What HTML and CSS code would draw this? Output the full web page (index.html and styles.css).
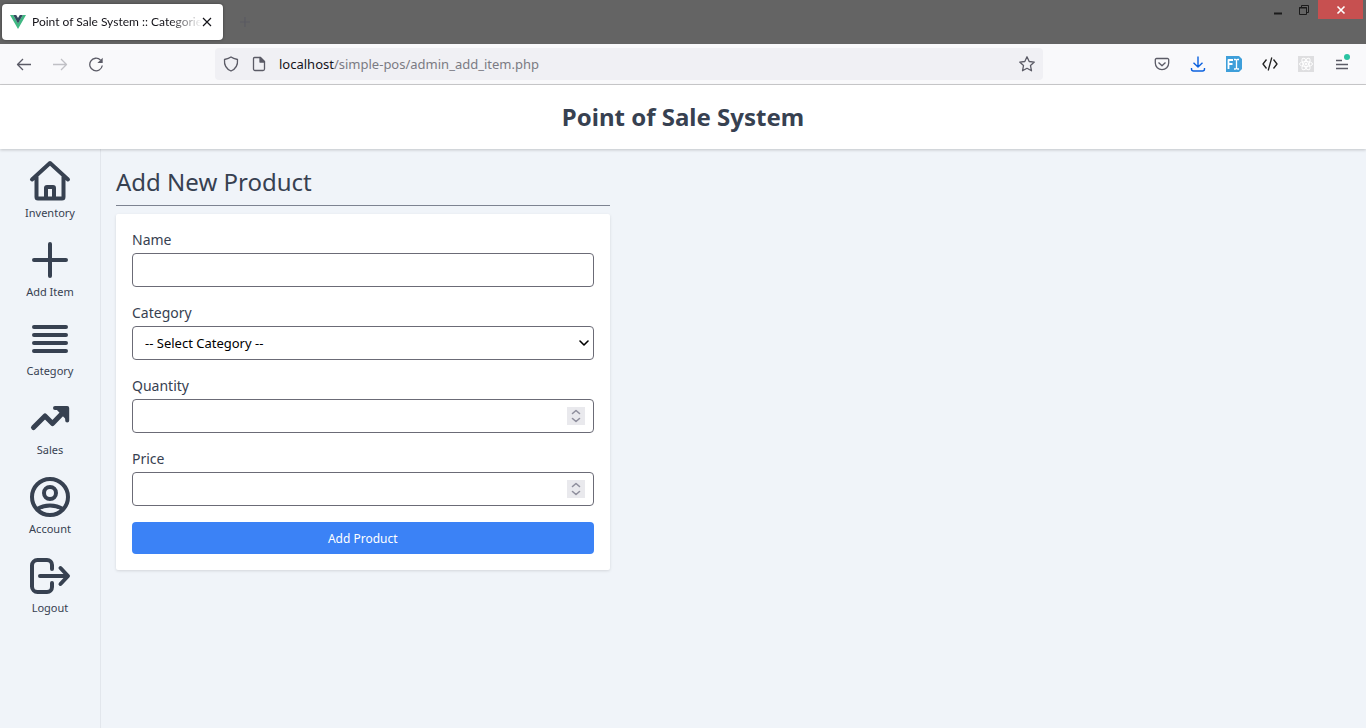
FILE: index.html
```html
<!DOCTYPE html>
<html lang="en">
<head>
<meta charset="utf-8">
<title>Point of Sale System</title>
<link rel="stylesheet" href="styles.css">
</head>
<body>
<div class="browser">
  <div class="titlebar">
    <div class="tab">
      <svg class="tab-logo" viewBox="0 0 16 16" aria-hidden="true"><path d="M0 1h3.2L8 9.300 12.800 1H16L8 15z" fill="#41b883"/><path d="M3.200 1H6.200L8 4l1.800-3h3L8 9.400z" fill="#34495e"/></svg>
      <span class="tab-title">Point of Sale System :: Categorie</span>
      <button class="tab-close" aria-label="Close tab"><svg viewBox="0 0 10 10"><path d="M1 1l8 8M9 1L1 9" stroke="#15141a" stroke-width="1.200"/></svg></button>
    </div>
    <button class="new-tab" aria-label="New tab"><svg viewBox="0 0 12 12"><path d="M6 1v10M1 6h10" stroke="#5a5a62" stroke-width="1.200"/></svg></button>
    <div class="window-controls">
      <button class="win-btn" aria-label="Minimize"><svg viewBox="0 0 16 16"><path d="M4 11.500h8" stroke="#1b1b1b" stroke-width="2"/></svg></button>
      <button class="win-btn" aria-label="Restore"><svg viewBox="0 0 16 16" fill="none" stroke="#1b1b1b"><path d="M2.500 5.500h7v7h-7zM4.500 5V3.500h7v7H10"/><path d="M2 6h8" stroke-width="1"/></svg></button>
      <button class="win-btn win-close" aria-label="Close window"><svg viewBox="0 0 16 16"><path d="M4.500 4.500l7 7M11.500 4.500l-7 7" stroke="#fff" stroke-width="1.600"/></svg></button>
    </div>
  </div>
  <div class="toolbar">
    <button class="tool" aria-label="Back"><svg viewBox="0 0 16 16"><path d="M7 3L1.500 8.500 7 14M1.500 8.500H15"/></svg></button>
    <button class="tool disabled" aria-label="Forward"><svg viewBox="0 0 16 16"><path d="M9 3l5.500 5.500L9 14M14.500 8.500H1"/></svg></button>
    <button class="tool" aria-label="Reload"><svg viewBox="0 0 16 16"><path d="M14.300 9.500A6.300 6.300 0 1 1 12.500 4"/><path d="M14.700 1.700V7H9.400z" fill="#5b5b66" stroke="none"/></svg></button>
    <div class="spacer"></div>
    <div class="urlbar">
      <svg viewBox="0 0 16 16" aria-hidden="true"><path d="M8 1c2 1.500 4 2 6.500 2.500C15 9 12.500 13 8 15 3.500 13 1 9 1.500 3.500 4 3 6 2.500 8 1z"/></svg>
      <svg class="page-icon" viewBox="0 0 16 16" aria-hidden="true"><path d="M3.500 1.500H9.500l4 4v7.500a1.500 1.500 0 0 1-1.500 1.500H4A1.500 1.500 0 0 1 2.500 13V2.500a1 1 0 0 1 1-1z"/><path d="M9 1.500V6h4.500z" fill="#5b5b66"/></svg>
      <span class="url"><span class="host">localhost</span>/simple-pos/admin_add_item.php</span>
      <svg viewBox="0 0 16 16" aria-hidden="true"><path d="M8 .8l2.200 4.700 5.100.6-3.800 3.500 1 5.200L8 12.300l-4.500 2.500 1-5.200L.700 6.100l5.100-.6z"/></svg>
    </div>
    <div class="spacer"></div>
    <button class="tool" aria-label="Save to Pocket"><svg viewBox="0 0 16 16"><path d="M2.500 2.500h11a1.200 1.200 0 0 1 1.200 1.200V7a6.700 6.700 0 0 1-13.400 0V3.700a1.200 1.200 0 0 1 1.200-1.200zM4.500 6.500L8 9.800l3.500-3.300"/></svg></button>
    <button class="tool download" aria-label="Downloads"><svg viewBox="0 0 16 16"><path d="M8 .5v10.500M3.500 6.800L8 11l4.500-4.200M1.500 12v1a2 2 0 0 0 2 2h9a2 2 0 0 0 2-2v-1"/></svg></button>
    <button class="tool" aria-label="Font inspector"><svg viewBox="0 0 16 16"><path d="M0 0H13l3 3v10l-3 3H0z" fill="#3e9fda" stroke="none"/><path d="M2.500 13V4H7M2.500 8H6.500" stroke="#fff" stroke-width="1.800"/><path d="M8 3.500h1.500l1 .5 1-.5H13M10.500 4v8.500M8 13h1.500l1-.5 1 .5H13" stroke="#fff"/></svg></button>
    <button class="tool dark" aria-label="Developer tools"><svg viewBox="0 0 16 16"><path d="M4.500 3.500L1 8l3.500 4.500M11.500 3.500L15 8l-3.500 4.500M9.800 1.500l-3.600 13"/></svg></button>
    <button class="tool" aria-label="React tools"><svg viewBox="0 0 16 16"><path d="M0 0h16v16H0z" fill="#dedee0" stroke="none"/><g stroke="#fff" stroke-width="1"><ellipse cx="8" cy="8" rx="6.500" ry="2.500"/><ellipse cx="8" cy="8" rx="6.500" ry="2.500" transform="rotate(60 8 8)"/><ellipse cx="8" cy="8" rx="6.500" ry="2.500" transform="rotate(120 8 8)"/><circle cx="8" cy="8" r="1" fill="#fff"/></g></svg></button>
    <button class="tool menu" aria-label="Menu"><svg viewBox="0 0 16 16"><path d="M2 4.500h6M2 8.500h12M2 12.500h12"/></svg><span class="menu-badge"></span></button>
  </div>
</div>

<header class="site-header"><h1>Point of Sale System</h1></header>

<div class="layout">
  <nav class="sidebar">
    <a href="#"><svg viewBox="0 0 48 48"><path d="M6 22.500L24 6l18 16.500M10.500 20v20a1.500 1.500 0 0 0 1.500 1.500h24a1.500 1.500 0 0 0 1.500-1.500V20M20 41V31a1 1 0 0 1 1-1h6a1 1 0 0 1 1 1v10"/></svg>Inventory</a>
    <a href="#"><svg viewBox="0 0 48 48"><path d="M24 8v32M8 24h32"/></svg>Add Item</a>
    <a href="#"><svg viewBox="0 0 48 48"><path d="M8 12h32M8 20h32M8 28h32M8 36h32"/></svg>Category</a>
    <a href="#"><svg viewBox="0 0 48 48"><path d="M7.500 33.500L19 22l7.500 7.500L40 15.500" stroke-width="5"/><path d="M29 14h12v12.500z" fill="currentColor" stroke="none"/><path d="M29 14h12.200v12.500"/></svg>Sales</a>
    <a href="#"><svg viewBox="0 0 48 48"><circle cx="24" cy="24" r="18"/><circle cx="24" cy="20" r="6"/><path d="M11.500 36c3.500-2.500 7.500-3.500 12.500-3.500s9 1 12.500 3.500" stroke-linecap="butt"/></svg>Account</a>
    <a href="#"><svg viewBox="0 0 48 48"><path d="M26 17v-4a5 5 0 0 0-5-5H11.500A5.500 5.500 0 0 0 6 13.500v21a5.500 5.500 0 0 0 5.500 5.500H21a5 5 0 0 0 5-5v-4M14 24h27M34.500 16l7.500 8-7.500 8"/></svg>Logout</a>
  </nav>
  <main class="content">
    <section class="product">
      <h2>Add New Product</h2>
      <form class="card">
        <div class="field">
          <label for="name">Name</label>
          <div class="control"><input id="name" type="text"></div>
        </div>
        <div class="field">
          <label for="category">Category</label>
          <div class="control">
            <select id="category"><option>-- Select Category --</option></select>
            <svg class="chevron" viewBox="0 0 10 6" aria-hidden="true"><path d="M1 1l4 4 4-4"/></svg>
          </div>
        </div>
        <div class="field">
          <label for="quantity">Quantity</label>
          <div class="control">
            <input id="quantity" type="number">
            <svg class="stepper" viewBox="0 0 18 18" aria-hidden="true"><path d="M5.500 6.500L9 3.500l3.500 3M5.500 11.500l3.500 3 3.500-3"/></svg>
          </div>
        </div>
        <div class="field">
          <label for="price">Price</label>
          <div class="control">
            <input id="price" type="number">
            <svg class="stepper" viewBox="0 0 18 18" aria-hidden="true"><path d="M5.500 6.500L9 3.500l3.500 3M5.500 11.500l3.500 3 3.500-3"/></svg>
          </div>
        </div>
        <button class="submit" type="button">Add Product</button>
      </form>
    </section>
  </main>
</div>
</body>
</html>
```
FILE: styles.css
```css
* { box-sizing: border-box; }

body {
  margin: 0;
  min-height: 100vh;
  display: flex;
  flex-direction: column;
  background: #f0f4f9;
  color: #374151;
  font-family: "Noto Sans", sans-serif;
}

button { padding: 0; border: 0; background: none; font: inherit; color: inherit; }
svg { display: block; flex: none; }

/* Browser window */
.titlebar { display: flex; height: 44px; padding: 4px 0 4px 2px; background: #646464; }
.tab {
  display: flex;
  align-items: center;
  width: 221px;
  height: 36px;
  padding: 0 11px 0 8px;
  border-radius: 4px;
  background: #fff;
  color: #15141a;
  box-shadow: 0 0 3px rgba(0, 0, 0, 0.4);
}
.tab-logo { width: 16px; height: 16px; }
.tab-title {
  flex: 1;
  margin-left: 6px;
  white-space: nowrap;
  font: 12px/20px Lato, sans-serif;
  mask-image: linear-gradient(to left, transparent, #000 32px);
}
.tab-close svg { width: 10px; height: 10px; }
.new-tab { width: 44px; }
.new-tab svg { width: 12px; height: 12px; margin: 0 auto; }
.window-controls { display: flex; margin: -4px 3px 0 auto; height: 19px; }
.win-btn { display: flex; align-items: center; justify-content: center; width: 27px; height: 19px; }
.win-btn svg { width: 16px; height: 16px; }
.win-close { width: 45px; background: #c75050; }

.toolbar {
  display: flex;
  align-items: center;
  height: 41px;
  padding: 0 6px;
  background: #f9f9fb;
  border-bottom: 1px solid #ccccce;
}
.tool { position: relative; display: flex; align-items: center; justify-content: center; width: 36px; height: 32px; }
.toolbar svg { width: 16px; height: 16px; fill: none; stroke: #5b5b66; stroke-width: 1.3; stroke-linejoin: round; }
.toolbar .disabled svg { stroke: #c0c0c5; }
.toolbar .download svg { stroke: #0b61df; stroke-width: 1.4; }
.toolbar .dark svg { stroke: #222; stroke-width: 1.3; }
.menu-badge { position: absolute; top: 6px; right: 10px; width: 6px; height: 6px; border-radius: 50%; background: #2ac3a2; }
.spacer { flex: 101; }
.urlbar {
  flex: 812;
  display: flex;
  align-items: center;
  gap: 12px;
  height: 32px;
  padding: 0 8px;
  border-radius: 4px;
  background: #f0f0f4;
}
.url { flex: 1; color: #7b7b83; font: 13px/20px "Noto Sans", sans-serif; }
.host { color: #15141a; }

/* Application */
.site-header {
  position: relative;
  padding: 14px 16px;
  background: #fff;
  text-align: center;
  box-shadow: 0 1px 3px rgba(0, 0, 0, 0.2);
}
h1 { margin: 0; font-size: 24px; line-height: 36px; font-weight: 700; }

.layout { flex: 1; display: flex; }
.sidebar {
  display: flex;
  flex-direction: column;
  gap: 15px;
  width: 101px;
  padding-top: 8px;
  border-right: 1px solid #e2e6ec;
}
.sidebar a {
  display: flex;
  flex-direction: column;
  align-items: center;
  color: inherit;
  text-decoration: none;
  font-size: 11px;
  line-height: 16px;
}
.sidebar svg {
  width: 48px;
  height: 48px;
  fill: none;
  stroke: currentColor;
  stroke-width: 4;
  stroke-linecap: round;
  stroke-linejoin: round;
}

.content { flex: 1; padding: 16px 16px 16px 15px; }
.product { width: 40%; }
h2 {
  margin: 0 0 8px;
  padding-bottom: 6px;
  border-bottom: 1px solid #7d8391;
  font-size: 24px;
  line-height: 34px;
  font-weight: 400;
}
.card {
  display: flex;
  flex-direction: column;
  gap: 16px;
  padding: 16px;
  border-radius: 2px;
  background: #fff;
  box-shadow: 0 1px 3px rgba(0, 0, 0, 0.12);
}
.field { display: flex; flex-direction: column; gap: 3px; }
.field label { font-size: 14px; line-height: 20px; }
.control { position: relative; }
.control input,
.control select {
  display: block;
  width: 100%;
  height: 34px;
  padding: 0 12px;
  border: 1px solid #6b6b76;
  border-radius: 4px;
  background: #fff;
  color: #000;
  font: 13px/20px "Noto Sans", sans-serif;
  appearance: none;
}
.control input::-webkit-inner-spin-button { appearance: none; }
.chevron,
.stepper { position: absolute; pointer-events: none; fill: none; stroke-linecap: round; stroke-linejoin: round; }
.chevron { top: 14px; right: 5px; width: 10px; height: 6px; stroke: #000; stroke-width: 1.6; }
.stepper { top: 8px; right: 9px; width: 18px; height: 18px; background: #e9e9ed; stroke: #8f8f9d; stroke-width: 1.6; }
.submit {
  height: 32px;
  border-radius: 4px;
  background: #3b82f6;
  color: #fff;
  font-size: 12px;
}
```
